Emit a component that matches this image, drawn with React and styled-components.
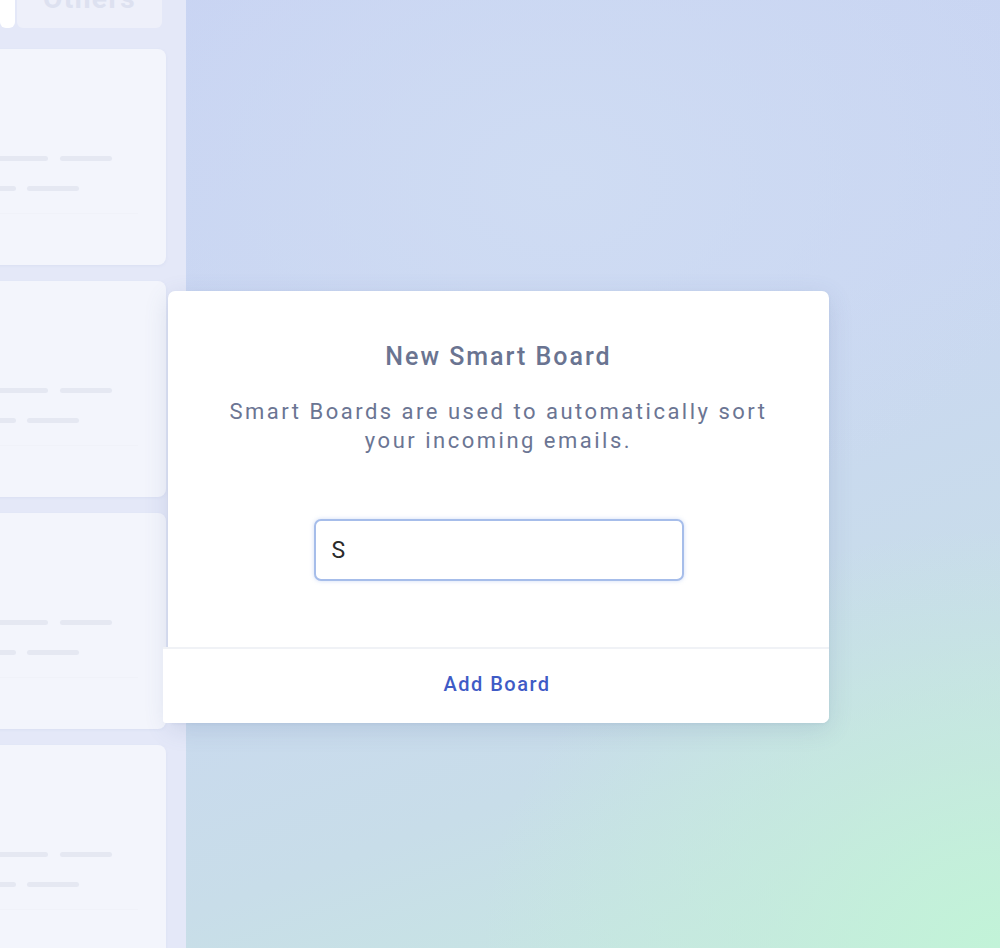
import React from 'react'
import styled, { createGlobalStyle } from 'styled-components'

const Global = createGlobalStyle`
    html, body {
        margin: 0;
        padding: 0;
        overflow: hidden;
    }
    body {
        font-family: Roboto, "Liberation Sans", sans-serif;
    }
`

const Page = styled.div`
    position: relative;
    display: flex;
    width: 1000px;
    height: 948px;
    overflow: hidden;
    background:
        radial-gradient(ellipse 520px 420px at 1000px 948px, #c2f3d8 0%, rgba(196, 238, 218, 0.6) 45%, rgba(200, 220, 235, 0) 100%),
        radial-gradient(ellipse 500px 360px at 560px 180px, #cfdcf3 0%, rgba(205, 218, 243, 0) 100%),
        linear-gradient(160deg, #c8d3f3 0%, #cad7f2 45%, #c8dde9 75%, #c6eadf 100%);
`

const Sidebar = styled.div`
    width: 186px;
    flex-shrink: 0;
    background: #e4e8f8;
    display: flex;
    flex-direction: column;
    overflow: hidden;
`

const TabRow = styled.div`
    display: flex;
    gap: 2px;
    margin-top: -16px;
    height: 44px;
    flex-shrink: 0;
`

const Tab = styled.div`
    width: ${p => p.width}px;
    height: 44px;
    border-radius: 0 0 6px 6px;
    background: ${p => p.active ? '#ffffff' : '#eef0fa'};
    color: #dde1f0;
    font-size: 28px;
    font-weight: 700;
    letter-spacing: 1.5px;
    line-height: 30px;
    text-align: center;
`

const CardList = styled.div`
    display: flex;
    flex-direction: column;
    gap: 16px;
    padding-top: 21px;
`

const Card = styled.div`
    width: 226px;
    height: 216px;
    margin-left: -60px;
    flex-shrink: 0;
    border-radius: 8px;
    background: #f3f5fc;
    box-shadow: 0 1px 3px rgba(170, 180, 215, 0.16);
    box-sizing: border-box;
    padding: 107px 0 0 18px;
    display: flex;
    flex-direction: column;
`

const BarRow = styled.div`
    display: flex;
    gap: ${p => p.gap}px;
    margin-bottom: 25px;
`

const Bar = styled.div`
    width: ${p => p.w}px;
    height: 5px;
    border-radius: 3px;
    background: #e5e8f2;
`

const CardRule = styled.div`
    margin-top: -3px;
    width: 180px;
    height: 1px;
    background: #f0f2f9;
`

const Modal = styled.div`
    position: absolute;
    left: 168px;
    top: 291px;
    width: 661px;
    display: flex;
    flex-direction: column;
    background: #ffffff;
    border-radius: 7px;
    box-shadow: 0 6px 24px rgba(80, 100, 150, 0.16), 0 1px 3px rgba(80, 100, 150, 0.08);
`

const Body = styled.div`
    display: flex;
    flex-direction: column;
    align-items: center;
    padding: 51px 20px 66px;
`

const Title = styled.h2`
    margin: 0;
    font-size: 25px;
    line-height: 30px;
    font-weight: 500;
    letter-spacing: 2px;
    color: #6a7491;
    text-align: center;
`

const Desc = styled.p`
    margin: 25px 0 0;
    font-size: 22px;
    line-height: 29px;
    font-weight: 400;
    letter-spacing: 2.5px;
    color: #6b7593;
    text-align: center;
    white-space: nowrap;
`

const Input = styled.input`
    margin-top: 64px;
    width: 370px;
    height: 62px;
    box-sizing: border-box;
    border: 2px solid #a6bdea;
    border-radius: 7px;
    box-shadow: 0 0 4px rgba(120, 155, 225, 0.35);
    padding: 0 16px;
    font-family: Roboto, "Liberation Sans", sans-serif;
    font-size: 23px;
    color: #2b2b2b;
    outline: none;
    background: #fff;
`

const Footer = styled.div`
    margin-left: -5px;
    height: 74px;
    border-top: 2px solid #f0f2f6;
    border-radius: 0 0 7px 3px;
    background: #ffffff;
    display: flex;
    align-items: center;
    justify-content: center;
`

const AddButton = styled.button`
    border: none;
    background: none;
    padding: 0 0 4px;
    margin-left: 2px;
    font-family: Roboto, "Liberation Sans", sans-serif;
    font-size: 20px;
    font-weight: 500;
    letter-spacing: 1.5px;
    color: #3f5bc6;
    cursor: pointer;
`

function SkeletonCard() {
    return (
        <Card>
            <BarRow gap={12}>
                <Bar w={90} />
                <Bar w={52} />
            </BarRow>
            <BarRow gap={11}>
                <Bar w={58} />
                <Bar w={52} />
            </BarRow>
            <CardRule />
        </Card>
    )
}

class App extends React.Component {
    render() {
        return (
            <Page>
                <Global />
                <Sidebar>
                    <TabRow>
                        <Tab active width={15}></Tab>
                        <Tab width={145}>Others</Tab>
                    </TabRow>
                    <CardList>
                        <SkeletonCard />
                        <SkeletonCard />
                        <SkeletonCard />
                        <SkeletonCard />
                    </CardList>
                </Sidebar>
                <Modal>
                    <Body>
                        <Title>New Smart Board</Title>
                        <Desc>
                            Smart Boards are used to automatically sort<br />
                            your incoming emails.
                        </Desc>
                        <Input defaultValue="S" />
                    </Body>
                    <Footer>
                        <AddButton>Add Board</AddButton>
                    </Footer>
                </Modal>
            </Page>
        )
    }
}

export default App
